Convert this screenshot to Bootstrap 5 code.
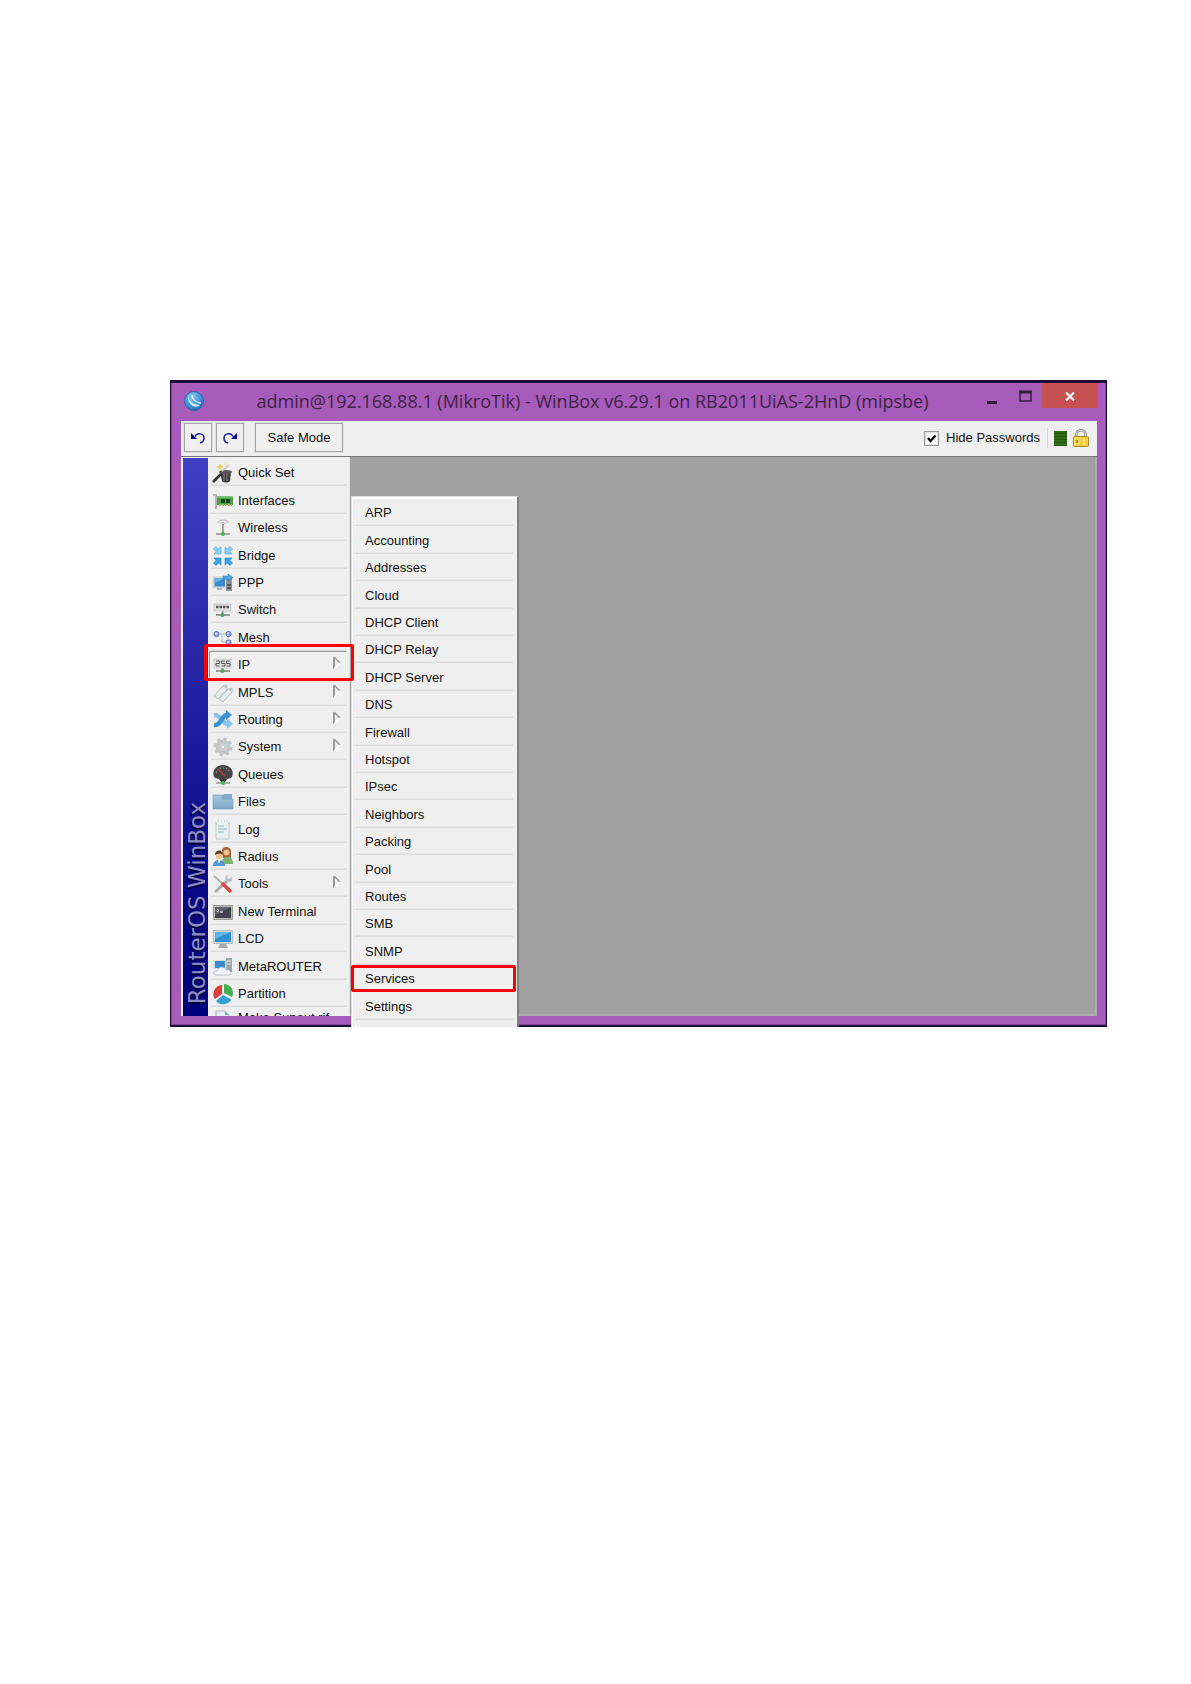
<!DOCTYPE html>
<html lang="en">
<head>
<meta charset="utf-8">
<meta name="viewport" content="width=device-width, initial-scale=1">
<title>WinBox</title>
<link href="https://cdn.jsdelivr.net/npm/bootstrap@5.3.0/dist/css/bootstrap.min.css" rel="stylesheet">
<style>
  body { background: #fff; font-family: "Liberation Sans", Arial, sans-serif; font-size: 13px; line-height: 20px; color: #111; }
  .page { padding: 380px 84px 40px 170px; }
  .desktop { background: #180c38; padding: 3px 1px 2px; overflow: hidden; }
  .win { background: #a75bba; border: 1px solid #8a469d; border-top: 0; padding: 0 8px 8px 9px; }
  .titlebar { height: 38px; padding-left: 3px; }
  .win-title { font-family: "Open Sans", sans-serif; font-size: 18px; line-height: 36px; color: #3c2446; padding-left: 3px; }
  .cap-btn { height: 25px; border: 0; background: transparent; padding: 0; }
  .cap-min { width: 28px; }
  .cap-max { width: 26px; margin-right: 10px; }
  .cap-close { width: 56px; background: #c75050; margin-right: -1px; }
  .client { background: #efefef; }
  .toolbar { height: 35px; padding: 2px 8px 0 3px; }
  .tool { height: 29px; border: 1px solid #a6a6a6; outline: 1px solid #e2e2e2; background: #f0f0f0; padding: 0; color: #111; }
  .tool-icon { width: 28px; margin-right: 4px; }
  .tool-text { width: 88px; margin-left: 7px; }
  .tool-right { height: 30px; }
  .hide-box { appearance: none; width: 15px; height: 15px; margin: 0 7px 0 0; border: 1px solid #999; outline: 1px solid #e0e0e0; outline-offset: -2px; background: #fff url("data:image/svg+xml,%3Csvg xmlns='http://www.w3.org/2000/svg' viewBox='0 0 13 13'%3E%3Cpath d='M3 6l2.500 3L10.500 3.500' fill='none' stroke='%23000' stroke-width='2.200'/%3E%3C/svg%3E") center / 13px 13px no-repeat; }
  .tool-sep { width: 1px; height: 20px; background: #d8d8d8; margin: 0 6px 0 7px; }
  .load-meter { width: 13px; height: 15px; background: repeating-linear-gradient(#2d6b14 0 2px, #235a10 2px 3px); margin-right: 6px; }
  .workspace { height: 560px; overflow: hidden; background: #a0a0a0; border-top: 1px solid #777; }
  .canvas { border: 2px solid #adadad; border-top: 0; border-left: 0; }
  .stripe { width: 27px; border: 2px solid #f4f4f4; border-top-width: 1px; border-right: 0; border-bottom: 0; background: linear-gradient(#4040c4, #0a0a88 75%, #00007a); }
  .stripe span { writing-mode: vertical-rl; transform: rotate(180deg); font-family: "DejaVu Sans", sans-serif; font-size: 23px; line-height: 25px; color: #8d8dc4; text-shadow: -2px -1px 1px #00003c; padding-top: 12px; padding-right: 2px; white-space: nowrap; }
  .side { width: 142px; background: #efefef; padding: 2px 0 0 3px; border-right: 1px solid #e4e4e4; }
  .mi, .si { height: 27px; }
  .mi:nth-child(5n+2), .mi:nth-child(5n+4), .si:nth-child(5n+2), .si:nth-child(5n+4) { height: 28px; }
  .mi:last-child { height: 20px; }
  .mi a, .si a { color: #111; text-decoration: none; white-space: nowrap; height: 100%; border-bottom: 1px solid #dcdcdc; box-shadow: inset 0 -1px #e6e6e6; padding-top: 2px; }
  .mi a { margin-right: 2px; padding-left: 2px; padding-right: 6px; }
  .mi a .pic { width: 20px; height: 20px; margin-right: 5px; flex: none; overflow: visible; }
  .mi a .arr { width: 8px; height: 14px; margin: 0 0 4px auto; }
  .mi.open a { border: 1px solid #999; border-right-color: #fff; border-bottom-color: #fff; margin-left: -2px; padding: 0 5px 0 3px; }
  .hot { position: relative; }
  .hot::after { content: ""; position: absolute; border: 3px solid #f00; border-radius: 2px; pointer-events: none; z-index: 5; }
  .mi.hot::after { inset: -7px -5px -3px -7px; }
  .si.hot::after { inset: 0 -1px 0 -4px; }
  .submenu { position: absolute; left: 170px; top: 75px; width: 168px; height: 560px; z-index: 3; background: #efefef; border: 2px solid #808080; border-left: 1px solid #ddd; border-top: 1px solid #ddd; box-shadow: inset 1px 2px #fff; padding: 2px 2px 0 3px; }
  .si a { padding-left: 10px; margin-right: 2px; }
</style>
<script src="https://cdn.jsdelivr.net/npm/bootstrap@5.3.0/dist/js/bootstrap.bundle.min.js"></script>
</head>
<body>
<svg width="0" height="0" class="position-absolute" aria-hidden="true">
  <defs>
    <linearGradient id="gFold" x1="0" y1="0" x2="0" y2="1"><stop offset="0" stop-color="#a3c6dd"/><stop offset="1" stop-color="#7ea7c6"/></linearGradient>
    <radialGradient id="gOrb" cx=".4" cy=".3" r=".8"><stop offset="0" stop-color="#8ccdf6"/><stop offset=".6" stop-color="#3b8ed6"/><stop offset="1" stop-color="#1c5ba6"/></radialGradient>
    <symbol id="arrow" viewBox="0 0 8 14"><path d="M1 13V1" stroke="#777" stroke-width="1.400"/><path d="M1 1l6 6" stroke="#999" stroke-width="1.400"/><path d="M7 7l-6 6" stroke="#fff" stroke-width="1.200"/></symbol>
  </defs>
</svg>
<main class="page">
 <div class="desktop">
  <div class="win">
   <header class="titlebar d-flex align-items-start">
    <svg width="20" height="20" viewBox="0 0 20 20" class="mt-2" aria-hidden="true"><circle cx="10" cy="10" r="9.500" fill="url(#gOrb)" stroke="#2a67a8"/><path d="M4 5c1 5 5 9 12 9-2 2-5 2-7 1C6 13 4 10 4 5z" fill="#d9effc"/><path d="M8 4c0 4 4 8 9 8-4 0-9-3-9-8z" fill="#eef8ff" stroke="#e3f3fd" stroke-width="1"/></svg>
    <div class="win-title flex-grow-1 text-center text-nowrap">admin@192.168.88.1 (MikroTik) - WinBox v6.29.1 on RB2011UiAS-2HnD (mipsbe)</div>
    <button class="cap-btn cap-min" aria-label="Minimize"><svg class="d-block mx-auto" width="10" height="19" aria-hidden="true"><path d="M0 16.500h10" stroke="#33203a" stroke-width="3"/></svg></button>
    <button class="cap-btn cap-max" aria-label="Maximize"><svg class="d-block ms-auto" width="13" height="25" aria-hidden="true"><path d="M1 9h11v9H1z" fill="none" stroke="#33203a" stroke-width="1.500"/><path d="M0 9h13" stroke="#33203a" stroke-width="3"/></svg></button>
    <button class="cap-btn cap-close" aria-label="Close"><svg class="d-block mx-auto" width="10" height="25" viewBox="0 0 10 25" aria-hidden="true"><path d="M1 9.500l8 8M9 9.500l-8 8" stroke="#fff" stroke-width="2.200"/></svg></button>
   </header>
   <div class="client position-relative">
    <div class="toolbar d-flex align-items-start">
     <button class="tool tool-icon" aria-label="Undo"><svg class="d-block mx-auto" width="16" height="14" viewBox="0 0 16 14" aria-hidden="true"><path d="M1 2l6 6H1z" fill="#00008b"/><path d="M5 5.500C7 1.500 14 2 14 7c0 3-2 4.500-4 5" fill="none" stroke="#1a1a98" stroke-width="1.500"/></svg></button>
     <button class="tool tool-icon" aria-label="Redo"><svg class="d-block mx-auto" width="16" height="14" viewBox="0 0 16 14" aria-hidden="true"><path d="M15 2L9 8h6z" fill="#00008b"/><path d="M11 5.500C9 1.500 2 2 2 7c0 3 2 4.500 4 5" fill="none" stroke="#1a1a98" stroke-width="1.500"/></svg></button>
     <button class="tool tool-text">Safe Mode</button>
     <div class="d-flex align-items-center ms-auto tool-right">
      <input class="hide-box" type="checkbox" id="hidePw" checked><label for="hidePw">Hide Passwords</label>
      <span class="tool-sep"></span><span class="load-meter"></span>
      <svg width="16" height="18" viewBox="0 0 16 18" aria-hidden="true"><path d="M3.500 8V5c0-5 9-5 9 0v3" fill="none" stroke="#8c8c8c" stroke-width="2.600"/><path d="M3.500 8V5c0-5 9-5 9 0v3" fill="none" stroke="#ddd" stroke-width="1"/><rect x=".5" y="7.500" width="15" height="10" rx="1" fill="#f6cf3c" stroke="#a98a2c"/><path d="M2 9v7M5 9v7M11 9v7" stroke="#fff0a0"/><path d="M4 11v3" stroke="#8a6a10" stroke-width="1.500"/></svg>
     </div>
    </div>
    <div class="workspace d-flex">
     <div class="stripe flex-shrink-0 d-flex align-items-end"><span>RouterOS WinBox</span></div>
     <nav class="side flex-shrink-0" aria-label="Main menu">
      <ul class="list-unstyled mb-0">
       <li class="mi"><a href="#" class="d-flex align-items-center"><svg class="pic" viewBox="0 0 20 20"><path d="M7 9h11l-1 9c-2 2-6 2-8 0z" fill="#3c3c3c"/><ellipse cx="12.500" cy="9" rx="6.500" ry="2" fill="#555"/><path d="M11 11v7M14 11v7" stroke="#888"/><path d="M0 19l8-8" stroke="#333" stroke-width="2.600"/><path d="M9 8l7-6" stroke="#ccc" stroke-width="2"/><path d="M7 1l1 2 2 1-2 1-1 2-1-2-2-1 2-1zM13 0v3M3 8v2" fill="#e9cf58" stroke="#e9cf58" stroke-width=".6"/></svg>Quick Set</a></li>
       <li class="mi"><a href="#" class="d-flex align-items-center"><svg class="pic" viewBox="0 0 20 20"><path d="M0 4h3v14" fill="none" stroke="#b4b4b4" stroke-width="2"/><path d="M4 5h16v9H4z" fill="#4ba04c"/><path d="M4 5h16v2H4z" fill="#75bd70"/><path d="M8 8h4v4H8zM13 8h4v4h-4z" fill="#1f4522"/><path d="M6 14h13" stroke="#b7b254" stroke-width="2" stroke-dasharray="2 1"/></svg>Interfaces</a></li>
       <li class="mi"><a href="#" class="d-flex align-items-center"><svg class="pic" viewBox="0 0 20 20"><path d="M5 5c1-4 9-4 10 0M7 6c1-2 5-2 6 0" fill="none" stroke="#ccc" stroke-width="1.300"/><path d="M10 6v9" stroke="#888" stroke-width="1.500"/><path d="M3 16h14" stroke="#aaa" stroke-width="2"/><circle cx="10" cy="16" r="2" fill="#35bb45"/></svg>Wireless</a></li>
       <li class="mi"><a href="#" class="d-flex align-items-center"><svg class="pic" viewBox="0 0 20 20"><g fill="#8ccff5" stroke="#4a9fd6" stroke-width=".6"><path d="M8 8V1L5.500 3 3 .5.500 3 3 5.500 1 8z"/><path d="M12 8V1l2.500 2L17 .5 19.500 3 17 5.500 19 8z"/></g><g fill="#38a5e8" stroke="#2581c0" stroke-width=".6"><path d="M8 12v7l-2.500-2L3 19.500.500 17 3 14.500 1 12z"/><path d="M12 12v7l2.500-2 2.500 2.500 2.500-2.500-2.500-2.500 2-2.500z"/></g></svg>Bridge</a></li>
       <li class="mi"><a href="#" class="d-flex align-items-center"><svg class="pic" viewBox="0 0 20 20"><path d="M13 5h6v13h-6z" fill="#8b9296"/><path d="M14 12h4M14 15h4" stroke="#444" stroke-width="1.500"/><path d="M0 4h13v11H0z" fill="#d8dde0" stroke="#b8bdc0" stroke-width=".6"/><path d="M1.500 5.500h10.500v8H1.500z" fill="#358bce"/><path d="M1.500 5.500H12L1.500 10z" fill="#64b2e6"/><path d="M4 15h5v2H4z" fill="#b5b5b5"/><path d="M10 3h5V1l5 3.500L15 8V6h-5z" fill="#4ba6e2" stroke="#2476b4" stroke-width=".5"/></svg>PPP</a></li>
       <li class="mi"><a href="#" class="d-flex align-items-center"><svg class="pic" viewBox="0 0 20 20"><path d="M1 4h17v7H1z" fill="#e0e0e0" stroke="#c4c4c4" stroke-width=".7"/><path d="M3 7h14" stroke="#555" stroke-width="2.400" stroke-dasharray="2.500 1"/><path d="M9.500 11v3M3 15h14" stroke="#999" stroke-width="2"/><circle cx="9.500" cy="15" r="2" fill="#45a94c"/></svg>Switch</a></li>
       <li class="mi"><a href="#" class="d-flex align-items-center"><svg class="pic" viewBox="0 0 20 20"><path d="M7 6h5M9 6v8h4" fill="none" stroke="#bbb"/><g fill="#90a8e4" stroke="#5470c4"><circle cx="3.500" cy="6" r="2.600"/><circle cx="15.500" cy="6" r="2.600"/><circle cx="15.500" cy="14.500" r="2.600"/></g><g fill="#e0e8ff"><circle cx="3" cy="5.500" r="1"/><circle cx="15" cy="5.500" r="1"/><circle cx="15" cy="14" r="1"/></g></svg>Mesh</a></li>
       <li class="mi open hot"><a href="#" class="d-flex align-items-center"><svg class="pic" viewBox="0 0 20 20"><path d="M1 4h17v9H1z" fill="#e2e2e2" stroke="#c8c8c8" stroke-width=".7"/><path d="M3 6h3.500v2.500H3V11h3.500M12 6H8.500v2.500H12V11H8.500M17 6h-3.500v2.500H17V11h-3.500" fill="none" stroke="#555"/><path d="M9.500 13v3M3 16h14" stroke="#999" stroke-width="2"/><circle cx="9.500" cy="16" r="2" fill="#45a94c"/></svg>IP<svg class="arr"><use href="#arrow"/></svg></a></li>
       <li class="mi"><a href="#" class="d-flex align-items-center"><svg class="pic" viewBox="0 0 20 20"><g fill="#e4edeb" stroke="#a9b7b5" stroke-width=".8"><path d="M1 13L10 3l4-1v4L5 16z"/><path d="M6 16l9-10 4-1v4l-9 10z"/></g><circle cx="12.500" cy="4" r=".8" fill="#93a3a3"/><circle cx="17.500" cy="7" r=".8" fill="#93a3a3"/></svg>MPLS<svg class="arr"><use href="#arrow"/></svg></a></li>
       <li class="mi"><a href="#" class="d-flex align-items-center"><svg class="pic" viewBox="0 0 20 20"><path d="M1 5c7-1 8 9 14 9" fill="none" stroke="#87c5eb" stroke-width="4.500"/><path d="M14 8l6 6-6 5z" fill="#87c5eb"/><path d="M1 15c8 1 7-10 13-10" fill="none" stroke="#3b93d3" stroke-width="4.500"/><path d="M13 0l6 5-6 5z" fill="#3b93d3"/></svg>Routing<svg class="arr"><use href="#arrow"/></svg></a></li>
       <li class="mi"><a href="#" class="d-flex align-items-center"><svg class="pic" viewBox="0 0 20 20"><circle cx="10" cy="10" r="8" fill="none" stroke="#c0c3c5" stroke-width="3" stroke-dasharray="3.200 3.080"/><circle cx="10" cy="10" r="5.500" fill="#ddd" stroke="#c3c6c8" stroke-width="4"/><circle cx="10" cy="10" r="2.200" fill="#f3f3f3" stroke="#b4b4b4"/></svg>System<svg class="arr"><use href="#arrow"/></svg></a></li>
       <li class="mi"><a href="#" class="d-flex align-items-center"><svg class="pic" viewBox="0 0 20 20"><path d="M1 12C-2 4 5 0 10 0s12 4 9 12c-3 3-15 3-18 0z" fill="#444"/><path d="M3 8c2-7 12-7 14 0" fill="none" stroke="#999" stroke-dasharray="1.500 1.500"/><path d="M5 4l7 7" stroke="#c83535" stroke-width="1.500"/><path d="M6 14h8l-2 3H8z" fill="#333"/><path d="M3 18h14" stroke="#aaa" stroke-width="2"/><circle cx="10" cy="18" r="2" fill="#3ac44d"/></svg>Queues</a></li>
       <li class="mi"><a href="#" class="d-flex align-items-center"><svg class="pic" viewBox="0 0 20 20"><path d="M0 3h9l2-1h8v5H0z" fill="#83abc7"/><path d="M0 3h8.500l1.500 4H20v10H0z" fill="url(#gFold)" stroke="#7499b6" stroke-width=".6"/></svg>Files</a></li>
       <li class="mi"><a href="#" class="d-flex align-items-center"><svg class="pic" viewBox="0 0 20 20"><path d="M3 1h13v18H3z" fill="#e8f1f1" stroke="#b4c7c8" stroke-width=".8"/><path d="M5 6h6M5 9h9M5 12h6" stroke="#8fb5b4" stroke-width="1.200"/><path d="M3 1h13" stroke="#fff" stroke-width="2" stroke-dasharray="1.500 1.500"/></svg>Log</a></li>
       <li class="mi"><a href="#" class="d-flex align-items-center"><svg class="pic" viewBox="0 0 20 20"><path d="M9 3c1-4 8-4 9 1v7h-8z" fill="#a65d2b"/><circle cx="13.500" cy="5.500" r="3" fill="#f0c094"/><path d="M9 16c0-8 10-8 11-1v2h-9z" fill="#79b56d"/><circle cx="6" cy="8.500" r="3.500" fill="#f0c094"/><path d="M2 8c0-6 8-6 8 0-2-2-5-2-8 0z" fill="#56391f"/><path d="M0 19c0-8 12-8 12 0z" fill="#5298d8"/><path d="M5 13l1 4 1.500-4z" fill="#fff"/></svg>Radius</a></li>
       <li class="mi"><a href="#" class="d-flex align-items-center"><svg class="pic" viewBox="0 0 20 20"><path d="M2 18L14 7" stroke="#aaa" stroke-width="3"/><path d="M13 2c-2 3 0 7 3 6 2 0 4-2 3-5l-3 2-2-1 1-3z" fill="#b9bcbe"/><path d="M1 2l9 8" stroke="#b0b0b0" stroke-width="2"/><path d="M9 9l9 9" stroke="#dc4545" stroke-width="3.500"/></svg>Tools<svg class="arr"><use href="#arrow"/></svg></a></li>
       <li class="mi"><a href="#" class="d-flex align-items-center"><svg class="pic" viewBox="0 0 20 20"><path d="M.5 3.500h19v14H.5z" fill="#bbb" stroke="#999"/><path d="M2 5h16v11H2z" fill="#42444c"/><path d="M2 5h16L2 13z" fill="#62656d"/><path d="M4 7l2 1.500L4 10M7 10h3" fill="none" stroke="#fff"/></svg>New Terminal</a></li>
       <li class="mi"><a href="#" class="d-flex align-items-center"><svg class="pic" viewBox="0 0 20 20"><path d="M.5 1.500h19v13H.5z" fill="#d7dcdf" stroke="#b5bcc1"/><path d="M2 3h16v10H2z" fill="#2f8fd3"/><path d="M2 3h16L2 10z" fill="#5fb4e8"/><path d="M7 15h6l2 4H5z" fill="#aaa"/></svg>LCD</a></li>
       <li class="mi"><a href="#" class="d-flex align-items-center"><svg class="pic" viewBox="0 0 20 20"><path d="M13 1h6v14h-6z" fill="#9ca3a6"/><path d="M14 4h4M14 7h4" stroke="#eee"/><path d="M.5 3h13v9H.5z" fill="#d4dadd"/><path d="M2 4h10v7H2z" fill="#358bce"/><path d="M3 18c-4-1-2-5 1-4 1-5 8-5 9-1 4-2 7 5 3 5z" fill="#f0f3fa" stroke="#a9b3ca" stroke-width=".8"/></svg>MetaROUTER</a></li>
       <li class="mi"><a href="#" class="d-flex align-items-center"><svg class="pic" viewBox="0 0 20 20"><path d="M9 10V1a9 9 0 0 0-7 14z" fill="#dd3d39"/><path d="M11 9V0a9 9 0 0 1 8 13z" fill="#43ae50"/><path d="M10 11l8.500 4.500A9.500 9.500 0 0 1 3 17z" fill="#32a2d3"/></svg>Partition</a></li>
       <li class="mi"><a href="#" class="d-flex align-items-center"><svg class="pic" viewBox="0 0 20 20"><path d="M3 3h9l4 4v14H3z" fill="#e5eff0" stroke="#a9bdc0"/><path d="M12 3v4h4" fill="#7fb3b0"/></svg>Make Supout.rif</a></li>
      </ul>
     </nav>
     <section class="canvas flex-grow-1" aria-label="Workspace"></section>
    </div>
    <nav class="submenu" aria-label="IP menu">
     <ul class="list-unstyled mb-0">
      <li class="si"><a href="#" class="d-flex align-items-center">ARP</a></li>
      <li class="si"><a href="#" class="d-flex align-items-center">Accounting</a></li>
      <li class="si"><a href="#" class="d-flex align-items-center">Addresses</a></li>
      <li class="si"><a href="#" class="d-flex align-items-center">Cloud</a></li>
      <li class="si"><a href="#" class="d-flex align-items-center">DHCP Client</a></li>
      <li class="si"><a href="#" class="d-flex align-items-center">DHCP Relay</a></li>
      <li class="si"><a href="#" class="d-flex align-items-center">DHCP Server</a></li>
      <li class="si"><a href="#" class="d-flex align-items-center">DNS</a></li>
      <li class="si"><a href="#" class="d-flex align-items-center">Firewall</a></li>
      <li class="si"><a href="#" class="d-flex align-items-center">Hotspot</a></li>
      <li class="si"><a href="#" class="d-flex align-items-center">IPsec</a></li>
      <li class="si"><a href="#" class="d-flex align-items-center">Neighbors</a></li>
      <li class="si"><a href="#" class="d-flex align-items-center">Packing</a></li>
      <li class="si"><a href="#" class="d-flex align-items-center">Pool</a></li>
      <li class="si"><a href="#" class="d-flex align-items-center">Routes</a></li>
      <li class="si"><a href="#" class="d-flex align-items-center">SMB</a></li>
      <li class="si"><a href="#" class="d-flex align-items-center">SNMP</a></li>
      <li class="si hot"><a href="#" class="d-flex align-items-center">Services</a></li>
      <li class="si"><a href="#" class="d-flex align-items-center">Settings</a></li>
     </ul>
    </nav>
   </div>
  </div>
 </div>
</main>
</body>
</html>
